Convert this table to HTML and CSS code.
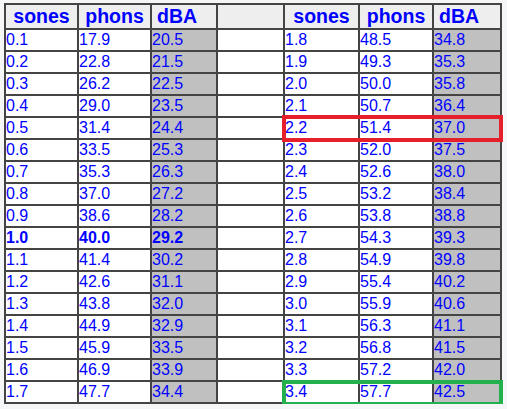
FILE: index.html
```html
<!DOCTYPE html>
<html>
<head>
<meta charset="utf-8">
<link rel="stylesheet" href="styles.css">
</head>
<body>
<div class="page">
  <div class="wrap">
    <table class="loud">
      <colgroup>
        <col class="c1"><col class="c2"><col class="c3"><col class="c4"><col class="c5"><col class="c6"><col class="c7">
      </colgroup>
      <thead>
        <tr><th>sones</th><th>phons</th><th class="db">dBA</th><th></th><th>sones</th><th>phons</th><th class="db">dBA</th></tr>
      </thead>
      <tbody>
        <tr><td>0.1</td><td>17.9</td><td class="g">20.5</td><td></td><td>1.8</td><td>48.5</td><td class="g">34.8</td></tr>
        <tr><td>0.2</td><td>22.8</td><td class="g">21.5</td><td></td><td>1.9</td><td>49.3</td><td class="g">35.3</td></tr>
        <tr><td>0.3</td><td>26.2</td><td class="g">22.5</td><td></td><td>2.0</td><td>50.0</td><td class="g">35.8</td></tr>
        <tr><td>0.4</td><td>29.0</td><td class="g">23.5</td><td></td><td>2.1</td><td>50.7</td><td class="g">36.4</td></tr>
        <tr><td>0.5</td><td>31.4</td><td class="g">24.4</td><td></td><td>2.2</td><td>51.4</td><td class="g">37.0</td></tr>
        <tr><td>0.6</td><td>33.5</td><td class="g">25.3</td><td></td><td>2.3</td><td>52.0</td><td class="g">37.5</td></tr>
        <tr><td>0.7</td><td>35.3</td><td class="g">26.3</td><td></td><td>2.4</td><td>52.6</td><td class="g">38.0</td></tr>
        <tr><td>0.8</td><td>37.0</td><td class="g">27.2</td><td></td><td>2.5</td><td>53.2</td><td class="g">38.4</td></tr>
        <tr><td>0.9</td><td>38.6</td><td class="g">28.2</td><td></td><td>2.6</td><td>53.8</td><td class="g">38.8</td></tr>
        <tr><td class="b">1.0</td><td class="b">40.0</td><td class="g b">29.2</td><td></td><td>2.7</td><td>54.3</td><td class="g">39.3</td></tr>
        <tr><td>1.1</td><td>41.4</td><td class="g">30.2</td><td></td><td>2.8</td><td>54.9</td><td class="g">39.8</td></tr>
        <tr><td>1.2</td><td>42.6</td><td class="g">31.1</td><td></td><td>2.9</td><td>55.4</td><td class="g">40.2</td></tr>
        <tr><td>1.3</td><td>43.8</td><td class="g">32.0</td><td></td><td>3.0</td><td>55.9</td><td class="g">40.6</td></tr>
        <tr><td>1.4</td><td>44.9</td><td class="g">32.9</td><td></td><td>3.1</td><td>56.3</td><td class="g">41.1</td></tr>
        <tr><td>1.5</td><td>45.9</td><td class="g">33.5</td><td></td><td>3.2</td><td>56.8</td><td class="g">41.5</td></tr>
        <tr><td>1.6</td><td>46.9</td><td class="g">33.9</td><td></td><td>3.3</td><td>57.2</td><td class="g">42.0</td></tr>
        <tr><td>1.7</td><td>47.7</td><td class="g">34.4</td><td></td><td>3.4</td><td>57.7</td><td class="g">42.5</td></tr>
      </tbody>
    </table>
    <div class="mark mark-red"></div>
    <div class="mark mark-green"></div>
  </div>
</div>
</body>
</html>
```

FILE: styles.css
```css
html, body {
  margin: 0;
  padding: 0;
  background: #f4f6f8;
}
.page {
  padding: 3px 0 0 4px;
}
.wrap {
  position: relative;
  width: 498px;
}
.loud {
  border-collapse: collapse;
  table-layout: fixed;
  width: 498px;
  background: #ffffff;
  font-family: "Liberation Sans", Arial, sans-serif;
  color: #0000ff;
}
.c1 { width: 73px; }
.c2 { width: 73px; }
.c3 { width: 66px; }
.c4 { width: 67px; }
.c5 { width: 75px; }
.c6 { width: 74px; }
.c7 { width: 68px; }
.loud th, .loud td {
  border: 2px solid #444444;
  padding: 0;
  overflow: hidden;
  white-space: nowrap;
}
.loud th {
  background: #eeeeee;
  font-size: 19.5px;
  font-weight: bold;
  height: 23px;
  line-height: 23px;
  text-align: center;
}
.loud th.db {
  text-align: left;
  padding-left: 5px;
}
.loud td {
  font-size: 16px;
  height: 20px;
  line-height: 20px;
  text-align: left;
}
.loud td.g {
  background: #c0c0c0;
}
.loud td.b {
  font-weight: bold;
}
.mark {
  position: absolute;
  box-sizing: border-box;
  border: 4px solid;
  pointer-events: none;
}
.mark-red {
  border-color: #e6202a;
  left: 278px;
  top: 112px;
  width: 221px;
  height: 27px;
}
.mark-green {
  border-color: #22b14c;
  left: 278px;
  top: 377px;
  width: 221px;
  height: 26px;
}
```
